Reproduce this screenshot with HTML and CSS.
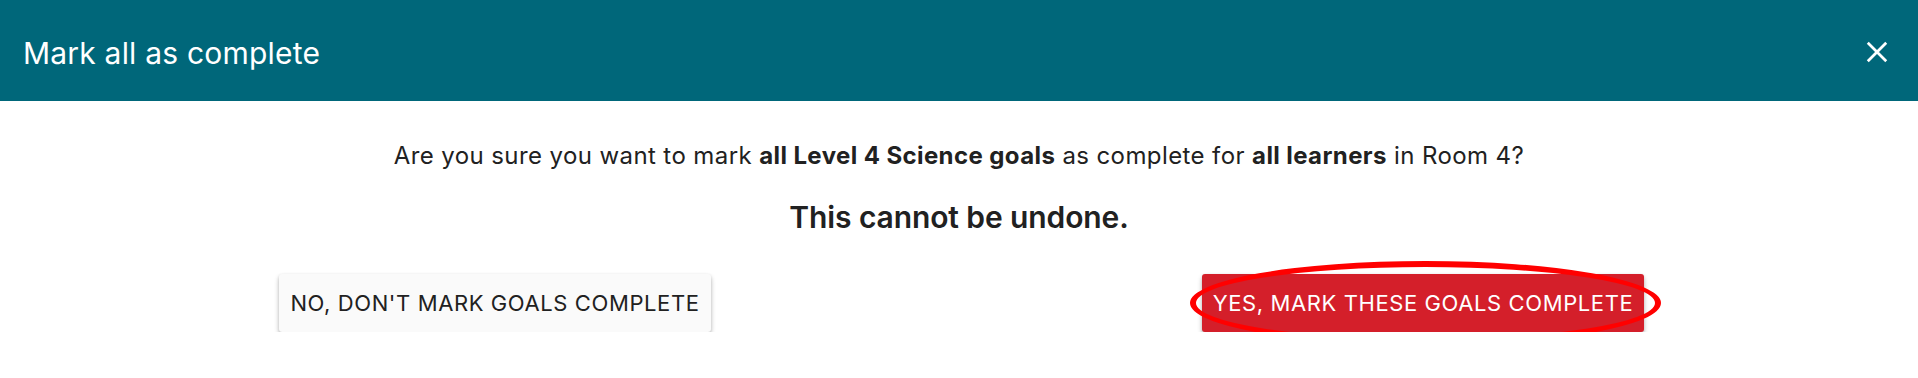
FILE: index.html
```html
<!DOCTYPE html>
<html lang="en">
<head>
<meta charset="utf-8">
<title>Mark all as complete</title>
<link rel="stylesheet" href="styles.css">
</head>
<body>
<div class="dialog">
  <header class="header">
    <h1 class="title">Mark all as complete</h1>
    <button class="close" aria-label="Close">
      <svg viewBox="0 0 24 24" width="22" height="22"><path d="M3 3 L21 21 M21 3 L3 21" stroke="#fff" stroke-width="3" stroke-linecap="square" fill="none"/></svg>
    </button>
  </header>
  <main class="content">
    <p class="question">Are you sure you want to mark <strong>all Level 4 Science goals</strong> as complete for <strong>all learners</strong> in Room 4?</p>
    <p class="warning">This cannot be undone.</p>
    <div class="actions">
      <button class="btn btn-cancel">NO, DON'T MARK GOALS COMPLETE</button>
      <div class="confirm-wrap">
        <button class="btn btn-confirm">YES, MARK THESE GOALS COMPLETE</button>
        <span class="highlight"></span>
      </div>
    </div>
  </main>
</div>
</body>
</html>
```
FILE: styles.css
```css
* { box-sizing: border-box; }
html, body { margin: 0; padding: 0; background: #fff; }
body {
  font-family: Inter, "Noto Sans", "Liberation Sans", sans-serif;
  color: #212121;
}
.header {
  height: 101px;
  background: #00677a;
  display: flex;
  align-items: center;
  justify-content: space-between;
  padding: 0 30px 0 23px;
}
.title {
  margin: 0;
  font-size: 30px;
  letter-spacing: 0.2px;
  font-weight: 400;
  color: #fff;
  line-height: 1;
  padding-top: 4px;
}
.close {
  background: none;
  border: 0;
  padding: 0;
  width: 22px;
  height: 22px;
  margin-top: 2px;
  display: flex;
}
.content {
  text-align: center;
}
.question {
  margin: 40px 0 0;
  font-size: 24px;
  letter-spacing: 0.4px;
  line-height: 29px;
}
.question strong { font-weight: 700; }
.warning {
  margin: 29px 0 0;
  font-size: 30px;
  line-height: 37px;
  font-weight: 600;
  letter-spacing: -0.1px;
}
.actions {
  margin-top: 38px;
  display: grid;
  grid-template-columns: 1fr 1fr;
  padding: 0 31px;
  justify-items: center;
}
.btn {
  height: 58px;
  border: 0;
  border-radius: 3px;
  padding: 0 11px;
  font-family: Inter, "Noto Sans", "Liberation Sans", sans-serif;
  font-size: 22px;
  letter-spacing: 0.6px;
  box-shadow: 0 3px 5px rgba(0,0,0,0.24), 0 1px 3px rgba(0,0,0,0.12);
}
.btn-cancel {
  background: #fafafa;
  color: #212121;
}
.btn-confirm {
  background: #d41f2a;
  color: #fff;
}
.confirm-wrap {
  position: relative;
}
.highlight {
  position: absolute;
  left: -12px;
  right: -17px;
  top: -13px;
  bottom: -13px;
  border: 6px solid #ff0000;
  border-radius: 50%;
  pointer-events: none;
}
```
